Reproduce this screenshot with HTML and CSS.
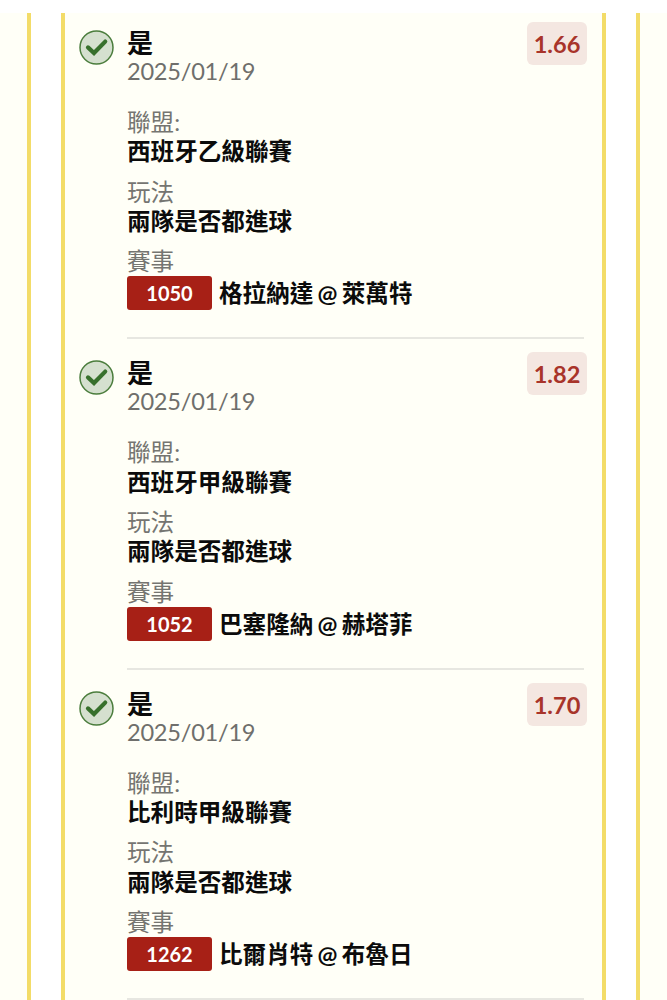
FILE: index.html
```
<!DOCTYPE html>
<html lang="zh-Hant">
<head>
    <meta charset="UTF-8">
    <title>投注紀錄</title>
    <link rel="stylesheet" href="styles.css">
</head>
<body>
    <svg class="defs" width="0" height="0">
        <symbol id="check" viewBox="0 0 35 35">
            <circle cx="17.5" cy="17.5" r="16.5" fill="#d5e0cf" stroke="#4b7d3d" stroke-width="1.5"/>
            <path d="M9 17.4L15 23L26.2 11.6" fill="none" stroke="#37702c" stroke-width="4.2" stroke-linecap="round"/>
        </symbol>
    </svg>
    <div class="page">
        <div class="side side-left"></div>
        <div class="card">
            <div class="bet">
                <svg class="icon"><use href="#check"/></svg>
                <div class="content">
                    <div class="head">
                        <div class="title">是</div>
                        <div class="odds">1.66</div>
                    </div>
                    <div class="date">2025/01/19</div>
                    <div class="field">
                        <div class="label">聯盟:</div>
                        <div class="value">西班牙乙級聯賽</div>
                    </div>
                    <div class="field">
                        <div class="label">玩法</div>
                        <div class="value">兩隊是否都進球</div>
                    </div>
                    <div class="field">
                        <div class="label">賽事</div>
                        <div class="match"><span class="code">1050</span><span>格拉納達 @ 萊萬特</span></div>
                    </div>
                </div>
            </div>
            <div class="bet">
                <svg class="icon"><use href="#check"/></svg>
                <div class="content">
                    <div class="head">
                        <div class="title">是</div>
                        <div class="odds">1.82</div>
                    </div>
                    <div class="date">2025/01/19</div>
                    <div class="field">
                        <div class="label">聯盟:</div>
                        <div class="value">西班牙甲級聯賽</div>
                    </div>
                    <div class="field">
                        <div class="label">玩法</div>
                        <div class="value">兩隊是否都進球</div>
                    </div>
                    <div class="field">
                        <div class="label">賽事</div>
                        <div class="match"><span class="code">1052</span><span>巴塞隆納 @ 赫塔菲</span></div>
                    </div>
                </div>
            </div>
            <div class="bet">
                <svg class="icon"><use href="#check"/></svg>
                <div class="content">
                    <div class="head">
                        <div class="title">是</div>
                        <div class="odds">1.70</div>
                    </div>
                    <div class="date">2025/01/19</div>
                    <div class="field">
                        <div class="label">聯盟:</div>
                        <div class="value">比利時甲級聯賽</div>
                    </div>
                    <div class="field">
                        <div class="label">玩法</div>
                        <div class="value">兩隊是否都進球</div>
                    </div>
                    <div class="field">
                        <div class="label">賽事</div>
                        <div class="match"><span class="code">1262</span><span>比爾肖特 @ 布魯日</span></div>
                    </div>
                </div>
            </div>
        </div>
        <div class="side side-right"></div>
    </div>
</body>
</html>
```

FILE: styles.css
```
* {
    box-sizing: border-box;
}
body {
    margin: 0;
    height: 1000px;
    overflow: hidden;
    background: #fff;
    font-family: Lato, "Noto Sans CJK TC", sans-serif;
    font-size: 23.6px;
    color: #0b0b0b;
}
.defs {
    display: block;
}
.page {
    display: flex;
    gap: 30px;
    height: 987px;
    margin-top: 13px;
    overflow: hidden;
}
.side {
    width: 31px;
    background: #fffff7;
}
.side-left {
    border-right: 4px solid #f3dc68;
}
.side-right {
    border-left: 4px solid #f3dc68;
}
.card {
    width: 545px;
    background: #fffff7;
    border: solid #f3dc68;
    border-width: 0 4px;
    padding: 0 18px 0 14px;
}
.bet {
    display: flex;
    gap: 13px;
    height: 330.4px;
    padding-top: 13px;
}
.bet:first-child {
    height: 326.4px;
    padding-top: 9px;
}
.icon {
    width: 35px;
    height: 35px;
    margin-top: 8px;
}
.content {
    flex: 1;
    border-bottom: 2px solid #e7e7e1;
}
.head {
    display: flex;
    justify-content: space-between;
    height: 35px;
}
.title {
    font-size: 26px;
    font-weight: 700;
    line-height: 42px;
}
.odds {
    width: 60px;
    height: 43px;
    margin-right: -3px;
    border-radius: 6px;
    background: #f4e7e1;
    color: #a8342a;
    font-weight: 700;
    line-height: 44px;
    text-align: center;
}
.date {
    color: #6f6f6c;
    line-height: 29px;
    letter-spacing: -0.25px;
    margin-bottom: 22px;
}
.field {
    margin-bottom: 11px;
    line-height: 29.3px;
}
.label {
    color: #757571;
}
.value, .match {
    font-weight: 700;
}
.match {
    display: flex;
    gap: 7px;
    line-height: 34px;
    word-spacing: -1.5px;
}
.code {
    width: 85px;
    height: 34px;
    border-radius: 3px;
    background: #a72016;
    color: #fff;
    font-size: 20px;
    text-align: center;
}
```
